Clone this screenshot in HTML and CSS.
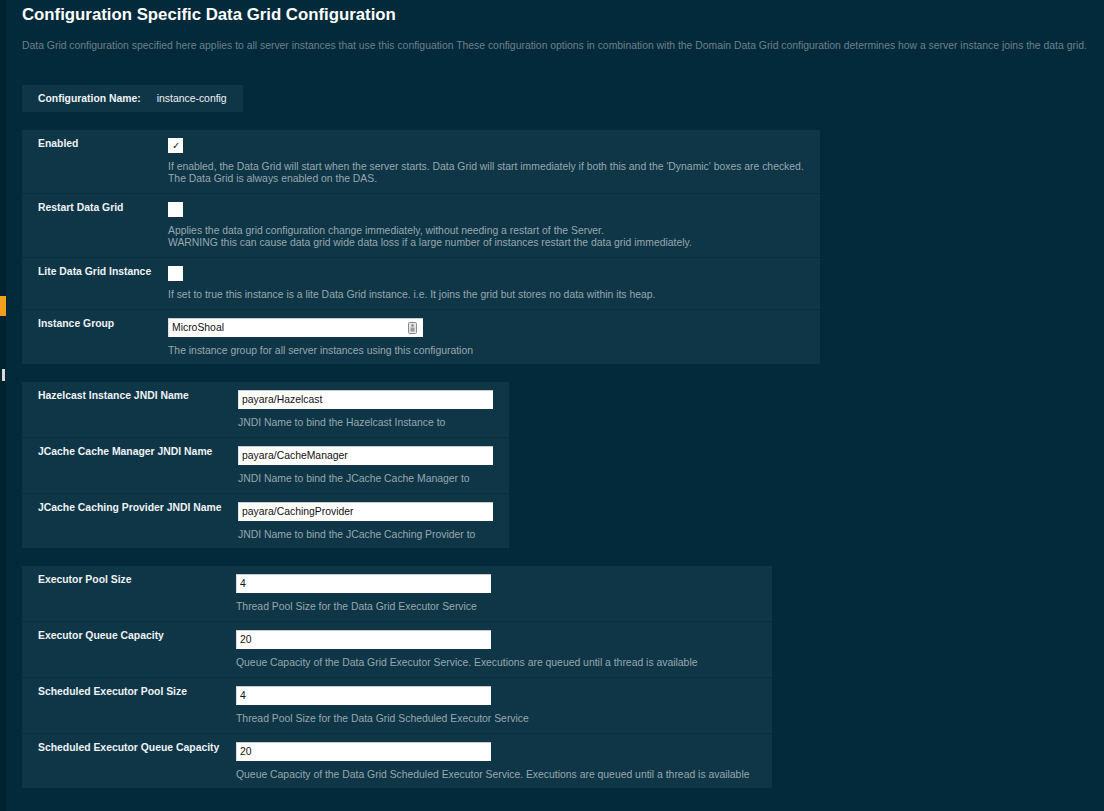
FILE: index.html
```html
<!DOCTYPE html>
<html lang="en">

<head>
    <title>Configuration Specific Data Grid Configuration</title>
    <link rel="stylesheet" href="styles.css">
</head>

<body>
    <div class="strip">
        <span class="strip-mark"></span>
        <span class="strip-thumb"></span>
    </div>
    <main class="content">
        <h1>Configuration Specific Data Grid Configuration</h1>
        <p class="intro">Data Grid configuration specified here applies to all server instances that use this configuation These configuration options in combination with the Domain Data Grid configuration determines how a server instance joins the data grid.</p>

        <div class="config-name">
            <span class="label">Configuration Name:</span>
            <span>instance-config</span>
        </div>

        <section class="panel panel-main">
            <div class="row">
                <div class="label">Enabled</div>
                <div class="field">
                    <span class="check">&#10003;</span>
                    <p class="help">If enabled, the Data Grid will start when the server starts. Data Grid will start immediately if both this and the 'Dynamic' boxes are checked.<br>The Data Grid is always enabled on the DAS.</p>
                </div>
            </div>
            <div class="row">
                <div class="label">Restart Data Grid</div>
                <div class="field">
                    <span class="check"></span>
                    <p class="help">Applies the data grid configuration change immediately, without needing a restart of the Server.<br>WARNING this can cause data grid wide data loss if a large number of instances restart the data grid immediately.</p>
                </div>
            </div>
            <div class="row">
                <div class="label">Lite Data Grid Instance</div>
                <div class="field">
                    <span class="check"></span>
                    <p class="help">If set to true this instance is a lite Data Grid instance. i.e. It joins the grid but stores no data within its heap.</p>
                </div>
            </div>
            <div class="row">
                <div class="label">Instance Group</div>
                <div class="field">
                    <div class="text-input wide">
                        <span>MicroShoal</span>
                        <svg class="key-icon" width="9" height="12" viewBox="0 0 9 12">
                            <rect x="0.5" y="0.5" width="8" height="11" rx="1" fill="#e4e4e4" stroke="#8a8a8a"/>
                            <rect x="3.5" y="2.5" width="2" height="2" fill="#6a6a6a"/>
                            <rect x="2.5" y="5.5" width="4" height="4" fill="#9a9a9a"/>
                        </svg>
                    </div>
                    <p class="help">The instance group for all server instances using this configuration</p>
                </div>
            </div>
        </section>

        <section class="panel panel-jndi">
            <div class="row">
                <div class="label">Hazelcast Instance JNDI Name</div>
                <div class="field">
                    <div class="text-input">payara/Hazelcast</div>
                    <p class="help">JNDI Name to bind the Hazelcast Instance to</p>
                </div>
            </div>
            <div class="row">
                <div class="label">JCache Cache Manager JNDI Name</div>
                <div class="field">
                    <div class="text-input">payara/CacheManager</div>
                    <p class="help">JNDI Name to bind the JCache Cache Manager to</p>
                </div>
            </div>
            <div class="row">
                <div class="label">JCache Caching Provider JNDI Name</div>
                <div class="field">
                    <div class="text-input">payara/CachingProvider</div>
                    <p class="help">JNDI Name to bind the JCache Caching Provider to</p>
                </div>
            </div>
        </section>

        <section class="panel panel-exec">
            <div class="row">
                <div class="label">Executor Pool Size</div>
                <div class="field">
                    <div class="text-input">4</div>
                    <p class="help">Thread Pool Size for the Data Grid Executor Service</p>
                </div>
            </div>
            <div class="row">
                <div class="label">Executor Queue Capacity</div>
                <div class="field">
                    <div class="text-input">20</div>
                    <p class="help">Queue Capacity of the Data Grid Executor Service. Executions are queued until a thread is available</p>
                </div>
            </div>
            <div class="row">
                <div class="label">Scheduled Executor Pool Size</div>
                <div class="field">
                    <div class="text-input">4</div>
                    <p class="help">Thread Pool Size for the Data Grid Scheduled Executor Service</p>
                </div>
            </div>
            <div class="row">
                <div class="label">Scheduled Executor Queue Capacity</div>
                <div class="field">
                    <div class="text-input">20</div>
                    <p class="help">Queue Capacity of the Data Grid Scheduled Executor Service. Executions are queued until a thread is available</p>
                </div>
            </div>
        </section>
    </main>
</body>

</html>
```

FILE: styles.css
```css
body {
    margin: 0;
    height: 811px;
    overflow: hidden;
    display: flex;
    background-color: #022a3a;
    color: #eef2f4;
    font-family: "Liberation Sans", Arial, sans-serif;
    font-size: 10.4px;
}

.strip {
    width: 6px;
    flex-shrink: 0;
    background-color: #01222f;
    position: relative;
}

.strip-mark {
    position: absolute;
    left: 0;
    top: 296px;
    width: 6px;
    height: 20px;
    background-color: #f0a01e;
}

.strip-thumb {
    position: absolute;
    left: 2px;
    top: 369px;
    width: 3px;
    height: 12px;
    background-color: #d8d8d8;
}

.content {
    flex: 1;
    padding: 0 16px;
}

h1 {
    font-size: 16.8px;
    line-height: 22px;
    margin: 4px 0 0;
    color: #ffffff;
}

.intro {
    margin: 13px 0 32px;
    line-height: 14px;
    color: #6d808b;
    white-space: nowrap;
}

.config-name {
    display: inline-flex;
    align-items: center;
    gap: 16px;
    height: 27px;
    padding: 0 16px;
    background-color: #0e3647;
}

.label {
    font-weight: bold;
    line-height: 12px;
    color: #eef2f4;
}

.panel {
    margin-top: 18px;
    background-color: #0e3647;
}

.panel-main {
    width: 798px;
    --label-width: 130px;
}

.panel-jndi {
    width: 487px;
    --label-width: 200px;
}

.panel-exec {
    width: 750px;
    --label-width: 198px;
}

.row {
    display: grid;
    grid-template-columns: var(--label-width) 1fr;
    padding: 8px 16px;
    border-bottom: 1px solid #0a2c3b;
}

.row:last-child {
    padding-bottom: 7px;
    border-bottom: none;
}

.field {
    display: flex;
    flex-direction: column;
    align-items: flex-start;
    gap: 8px;
}

.check {
    width: 15px;
    height: 15px;
    background-color: #ffffff;
    color: #1a1a1a;
    font-size: 10px;
    line-height: 15px;
    text-align: center;
}

.text-input {
    box-sizing: border-box;
    width: 255px;
    height: 19px;
    padding: 0 4px 0 3px;
    background-color: #ffffff;
    border-top: 1px solid #c9c9c9;
    border-left: 1px solid #e0e0e0;
    color: #111111;
    line-height: 18px;
    display: flex;
    align-items: center;
    justify-content: space-between;
}

.text-input.wide {
    padding-right: 6px;
}

.help {
    margin: 0;
    line-height: 12px;
    color: #98a6ad;
    white-space: nowrap;
}
```
